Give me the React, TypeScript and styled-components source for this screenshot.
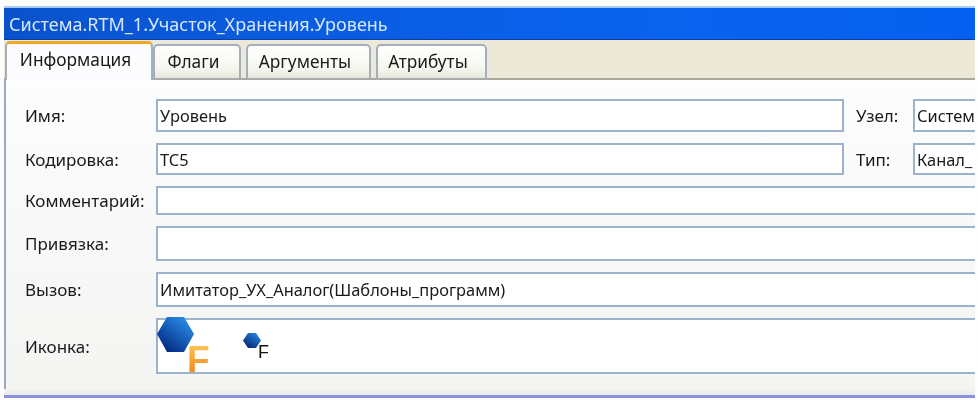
import React from "react";
import styled, { createGlobalStyle } from "styled-components";

const Global = createGlobalStyle`
  html, body { margin: 0; padding: 0; background: #fdfdfe; }
  #root { width: 978px; height: 400px; overflow: hidden; }
`;

const Page = styled.div`
  width: 978px;
  height: 400px;
  box-sizing: border-box;
  padding: 6px 3px 0 4px;
  overflow: hidden;
  font-family: "Noto Sans", "DejaVu Sans", sans-serif;
  font-size: 17px;
  color: #1a1a1a;
  filter: blur(0.5px);
`;

const Window = styled.div`
  display: flex;
  flex-direction: column;
  height: 392px;
  border-bottom: 3px solid #8a90dc;
  box-sizing: border-box;
`;

const TitleBar = styled.div`
  flex: none;
  height: 34px;
  box-sizing: border-box;
  padding-left: 5px;
  display: flex;
  align-items: center;
  color: #d6e8ff;
  font-size: 18px;
  background: linear-gradient(90deg, #0a52cc 0%, #0a5ce0 30%, #0a63ee 70%, #0560f0 100%);
  border-top: 2px solid #a9cdf0;
  border-bottom: 1px solid #0a3fa8;
`;

const TabBar = styled.div`
  flex: none;
  height: 40px;
  box-sizing: border-box;
  display: flex;
  align-items: flex-end;
  gap: 5px;
  padding-left: 1px;
  background: #ece9d8;
  border-bottom: 2px solid #a8a89c;
`;

const Tab = styled.div<{ $active?: boolean; $w: number }>`
  box-sizing: border-box;
  flex: none;
  display: flex;
  align-items: center;
  justify-content: center;
  font-size: 17.3px;
  width: ${(p) => p.$w}px;
  height: ${(p) => (p.$active ? "39px" : "35px")};
  padding: ${(p) => (p.$active ? "0 7px 5px 0" : "0 7px 2px 0")};
  margin-bottom: ${(p) => (p.$active ? "-2px" : "-1px")};
  margin-right: ${(p) => (p.$active ? "-5px" : "0")};
  background: ${(p) => (p.$active ? "#fcfcfe" : "linear-gradient(180deg, #fff 0%, #f6f6f0 70%, #e8e6da 100%)")};
  border: 2px solid #a4afbc;
  border-bottom: ${(p) => (p.$active ? "none" : "1px solid #a4afbc")};
  border-top: ${(p) => (p.$active ? "3px solid #f0a828" : "2px solid #a4afbc")};
  border-radius: 5px 5px 0 0;
`;

const Body = styled.div`
  flex: none;
  height: 309px;
  overflow: hidden;
  box-sizing: border-box;
  border-left: 2px solid #9aa8c0;
  padding: 19px 0 0 19px;
  background: linear-gradient(180deg, #fdfdfe 0%, #f8f8f8 50%, #f4f4f2 100%);
`;

const FootBand = styled.div`
  flex: 1;
  background: linear-gradient(180deg, #f3f3ef 0%, #eaeaf0 100%);
`;

const Form = styled.div`
  display: grid;
  grid-template-columns: 131px 688px 69px 100px;
  grid-template-rows: 33px 32px 29px 35px 35px 56px;
  row-gap: 11px;
  width: 990px;
`;

const Label = styled.div`
  display: flex;
  align-items: center;
  white-space: nowrap;
`;

const SideLabel = styled(Label)`
  padding-left: 12px;
`;

const Field = styled.div<{ $wide?: boolean }>`
  box-sizing: border-box;
  display: flex;
  align-items: center;
  padding-left: 2px;
  font-size: 16.4px;
  background: #fff;
  border: 2px solid #9db2cc;
  white-space: nowrap;
  overflow: hidden;
  ${(p) => (p.$wide ? "grid-column: 2 / 5;" : "")}
`;

const IconField = styled(Field)`
  align-items: flex-start;
  padding-left: 0;
  overflow: visible;
  gap: 28px;
`;

const BigIcon = styled.svg`
  flex: none;
  margin: -3px 0 0 -2px;
  overflow: visible;
`;

const SmallIcon = styled.svg`
  flex: none;
  margin-top: 10px;
  overflow: visible;
`;

const Big = () => (
  <BigIcon width="56" height="56" viewBox="0 0 56 56">
    <defs>
      <linearGradient id="hexA" x1="0.9" y1="0" x2="0.1" y2="1">
        <stop offset="0" stopColor="#2c96f0" />
        <stop offset="1" stopColor="#001f78" />
      </linearGradient>
      <linearGradient id="fA" x1="0" y1="0" x2="0" y2="1">
        <stop offset="0" stopColor="#ffd060" />
        <stop offset="1" stopColor="#f07a10" />
      </linearGradient>
    </defs>
    <polygon points="1,17 11,0 28,0 38,17 28,35 11,35" fill="url(#hexA)" />
    <text x="31" y="55" fontFamily="Liberation Sans" fontWeight="700" fontSize="37" fill="url(#fA)">F</text>
  </BigIcon>
);

const Small = () => (
  <SmallIcon width="30" height="30" viewBox="0 0 30 30">
    <defs>
      <linearGradient id="hexB" x1="0.9" y1="0" x2="0.1" y2="1">
        <stop offset="0" stopColor="#2c8ae8" />
        <stop offset="1" stopColor="#00206e" />
      </linearGradient>
    </defs>
    <polygon points="3,10.5 8,3 16,3 21,10.5 16,18 8,18" fill="url(#hexB)" />
    <text x="18" y="28" fontFamily="Liberation Sans" fontSize="18" fill="#111">F</text>
  </SmallIcon>
);

export default function App() {
  return (
    <Page>
      <Global />
      <Window>
        <TitleBar>Система.RTM_1.Участок_Хранения.Уровень</TitleBar>
        <TabBar>
          <Tab $active $w={148}>Информация</Tab>
          <Tab $w={88}>Флаги</Tab>
          <Tab $w={125}>Аргументы</Tab>
          <Tab $w={111}>Атрибуты</Tab>
        </TabBar>
        <Body>
          <Form>
            <Label>Имя:</Label>
            <Field>Уровень</Field>
            <SideLabel>Узел:</SideLabel>
            <Field>Систем</Field>
            <Label>Кодировка:</Label>
            <Field>TC5</Field>
            <SideLabel>Тип:</SideLabel>
            <Field>Канал_</Field>
            <Label>Комментарий:</Label>
            <Field $wide />
            <Label>Привязка:</Label>
            <Field $wide />
            <Label>Вызов:</Label>
            <Field $wide>Имитатор_УХ_Аналог(Шаблоны_программ)</Field>
            <Label>Иконка:</Label>
            <IconField $wide>
              <Big />
              <Small />
            </IconField>
          </Form>
        </Body>
        <FootBand />
      </Window>
    </Page>
  );
}
